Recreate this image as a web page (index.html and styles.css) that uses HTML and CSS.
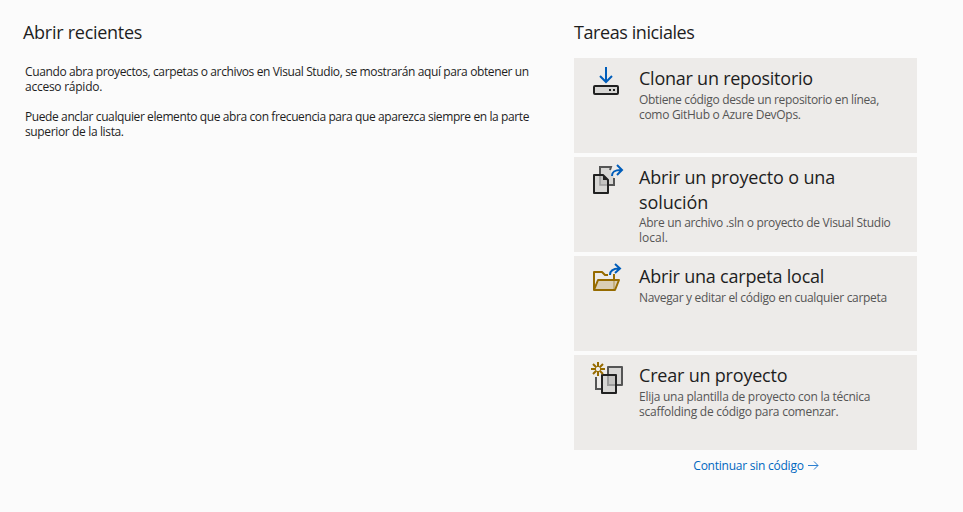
FILE: index.html
```html
<!DOCTYPE html>
<html lang="es">
<head>
<meta charset="utf-8">
<title>Visual Studio</title>
<link rel="stylesheet" href="styles.css">
</head>
<body>
<main class="start">
  <section class="recent">
    <h1 class="heading heading-recent">Abrir recientes</h1>
    <div class="hint">
      <p><span class="l1">Cuando abra proyectos, carpetas o archivos en Visual Studio, se mostrarán aquí para obtener un</span><br><span class="l2">acceso rápido.</span></p>
      <p><span class="l3">Puede anclar cualquier elemento que abra con frecuencia para que aparezca siempre en la parte</span><br><span class="l4">superior de la lista.</span></p>
    </div>
  </section>
  <section class="tasks">
    <h1 class="heading heading-tasks">Tareas iniciales</h1>
    <div class="cards">
      <button class="card">
        <svg class="icon" viewBox="0 -2 50 45" fill="none">
          <path d="M22 7v14.500M16 16l6 6 6-6" stroke="#005dba" stroke-width="2"/>
          <rect x="10" y="26" width="24" height="8" rx="1" fill="#212121" fill-opacity=".1" stroke="#212121" stroke-width="2"/>
          <path d="M25 29h2v2h-2zM29 29h2v2h-2z" fill="#212121"/>
        </svg>
        <span class="text">
          <span class="title t1">Clonar un repositorio</span>
          <span class="desc"><span class="d1">Obtiene código desde un repositorio en línea,</span><br><span class="d2">como GitHub o Azure DevOps.</span></span>
        </span>
      </button>
      <button class="card">
        <svg class="icon" viewBox="0 -1 50 45" fill="none">
          <path d="M16 9h11v6l3 4v8H16z" fill="#212121" fill-opacity=".1"/>
          <path d="M16 16V9h11l-1 3M30 20v7h-5" stroke="#555" stroke-width="2"/>
          <path d="M16 18v9h8" stroke="#aaa" stroke-width="1.500"/>
          <path d="M10 17h9l5 5v13H10z" fill="#212121" fill-opacity=".1" stroke="#212121" stroke-width="2" stroke-linejoin="round"/>
          <path d="M19 17v5h5z" fill="#212121"/>
          <path d="M28 18c0-4 2-6 9-6M33 7l5 5-5 5" stroke="#005dba" stroke-width="2"/>
        </svg>
        <span class="text">
          <span class="title"><span class="t2">Abrir un proyecto o una</span><br><span class="t3">solución</span></span>
          <span class="desc desc-tight"><span class="d3">Abre un archivo .sln o proyecto de Visual Studio</span><br><span class="d4">local.</span></span>
        </span>
      </button>
      <button class="card">
        <svg class="icon" viewBox="0 0 50 45" fill="none">
          <path d="M14 24h21l-4 10H10z" fill="#966b00" fill-opacity=".22"/>
          <path d="M10 34V16h8l3 3h3M10 34l4-10h21l-4 10H10z" stroke="#966b00" stroke-width="2" stroke-linejoin="round"/>
          <path d="M30 18v6" stroke="#966b00" stroke-width="2"/>
          <path d="M30 25v8" stroke="#966b00" stroke-width="2" opacity=".3"/>
          <path d="M26 19c0-4 2-6.500 9-6.500M31 8l5 4.500-5 4.500" stroke="#005dba" stroke-width="2"/>
        </svg>
        <span class="text">
          <span class="title t4">Abrir una carpeta local</span>
          <span class="desc"><span class="d5">Navegar y editar el código en cualquier carpeta</span></span>
        </span>
      </button>
      <button class="card">
        <svg class="icon" viewBox="0 0 50 45" fill="none">
          <path d="M12 22v12h5" stroke="#555" stroke-width="2"/>
          <path d="M24 12h14v18H24z" fill="#212121" fill-opacity=".1"/>
          <path d="M24 19v-7h14v18H33" stroke="#555" stroke-width="2" stroke-linejoin="round"/>
          <path d="M24 21v9h7" stroke="#aaa" stroke-width="2"/>
          <path d="M18 20h14v18H18z" fill="#212121" fill-opacity=".1" stroke="#212121" stroke-width="2" stroke-linejoin="round"/>
          <path d="M14 7v5M14 16v5M7 14h5M16 14h5M9 9l3.500 3.500M15.500 15.500l3.500 3.500M19 9l-3.500 3.500M12.500 15.500l-3.500 3.500" stroke="#966b00" stroke-width="2"/>
        </svg>
        <span class="text">
          <span class="title t5">Crear un proyecto</span>
          <span class="desc"><span class="d6">Elija una plantilla de proyecto con la técnica</span><br><span class="d7">scaffolding de código para comenzar.</span></span>
        </span>
      </button>
    </div>
    <a class="continue"><span class="c1">Continuar sin código</span><svg class="arrow" viewBox="0 0 11 9" fill="none"><path d="M0 4.500h10M6 .5l4 4-4 4" stroke="#2b7fd0"/></svg></a>
  </section>
</main>
</body>
</html>
```
FILE: styles.css
```css
body {
  margin: 0;
  background: #fbfbfb;
  color: #1e1e1e;
  font: 12px/15px "Open Sans", "Noto Sans", sans-serif;
}
.start {
  display: grid;
  grid-template-columns: 551px 343px;
  height: 512px;
  padding: 20px 0 0 23px;
  box-sizing: border-box;
  overflow: hidden;
}
.heading {
  margin: 0;
  font-size: 18px;
  font-weight: 400;
  line-height: 25px;
  white-space: nowrap;
}
.hint { padding: 19px 0 0 2px; white-space: nowrap; }
.hint p { margin: 0 0 15px; }
.cards { display: flex; flex-direction: column; gap: 4px; margin-top: 13px; }
.card {
  display: flex;
  align-items: flex-start;
  height: 95px;
  padding: 0 0 0 10px;
  border: 0;
  background: #edebe9;
  color: #1e1e1e;
  font: inherit;
  text-align: left;
  white-space: nowrap;
}
.icon { flex: none; width: 50px; height: 45px; }
.text { display: block; padding: 8px 0 0 5px; }
.title, .desc { display: block; }
.title { font-size: 18px; font-weight: 400; line-height: 25px; }
.desc { padding-top: 1px; color: #555; }
.desc-tight { padding-top: 0; }
.continue {
  display: flex;
  align-items: center;
  justify-content: center;
  gap: 4px;
  margin-top: 8px;
  padding-left: 21px;
  color: #0067c0;
}
.arrow { width: 11px; height: 9px; }

/* tracking per line */
.heading-recent { letter-spacing: -.27px; }
.heading-tasks { letter-spacing: -.42px; }
.t1 { letter-spacing: -.24px; }
.t2 { letter-spacing: -.15px; }
.t3 { letter-spacing: -.1px; }
.t4 { letter-spacing: -.2px; }
.t5 { letter-spacing: -.2px; }
.l1 { letter-spacing: -.38px; }
.l2 { letter-spacing: -.25px; }
.l3 { letter-spacing: -.4px; }
.l4 { letter-spacing: -.36px; }
.d1 { letter-spacing: -.33px; }
.d2 { letter-spacing: -.3px; }
.d3 { letter-spacing: -.3px; }
.d5 { letter-spacing: -.32px; }
.d6 { letter-spacing: -.26px; }
.d7 { letter-spacing: -.25px; }
.c1 { letter-spacing: -.24px; }
```
